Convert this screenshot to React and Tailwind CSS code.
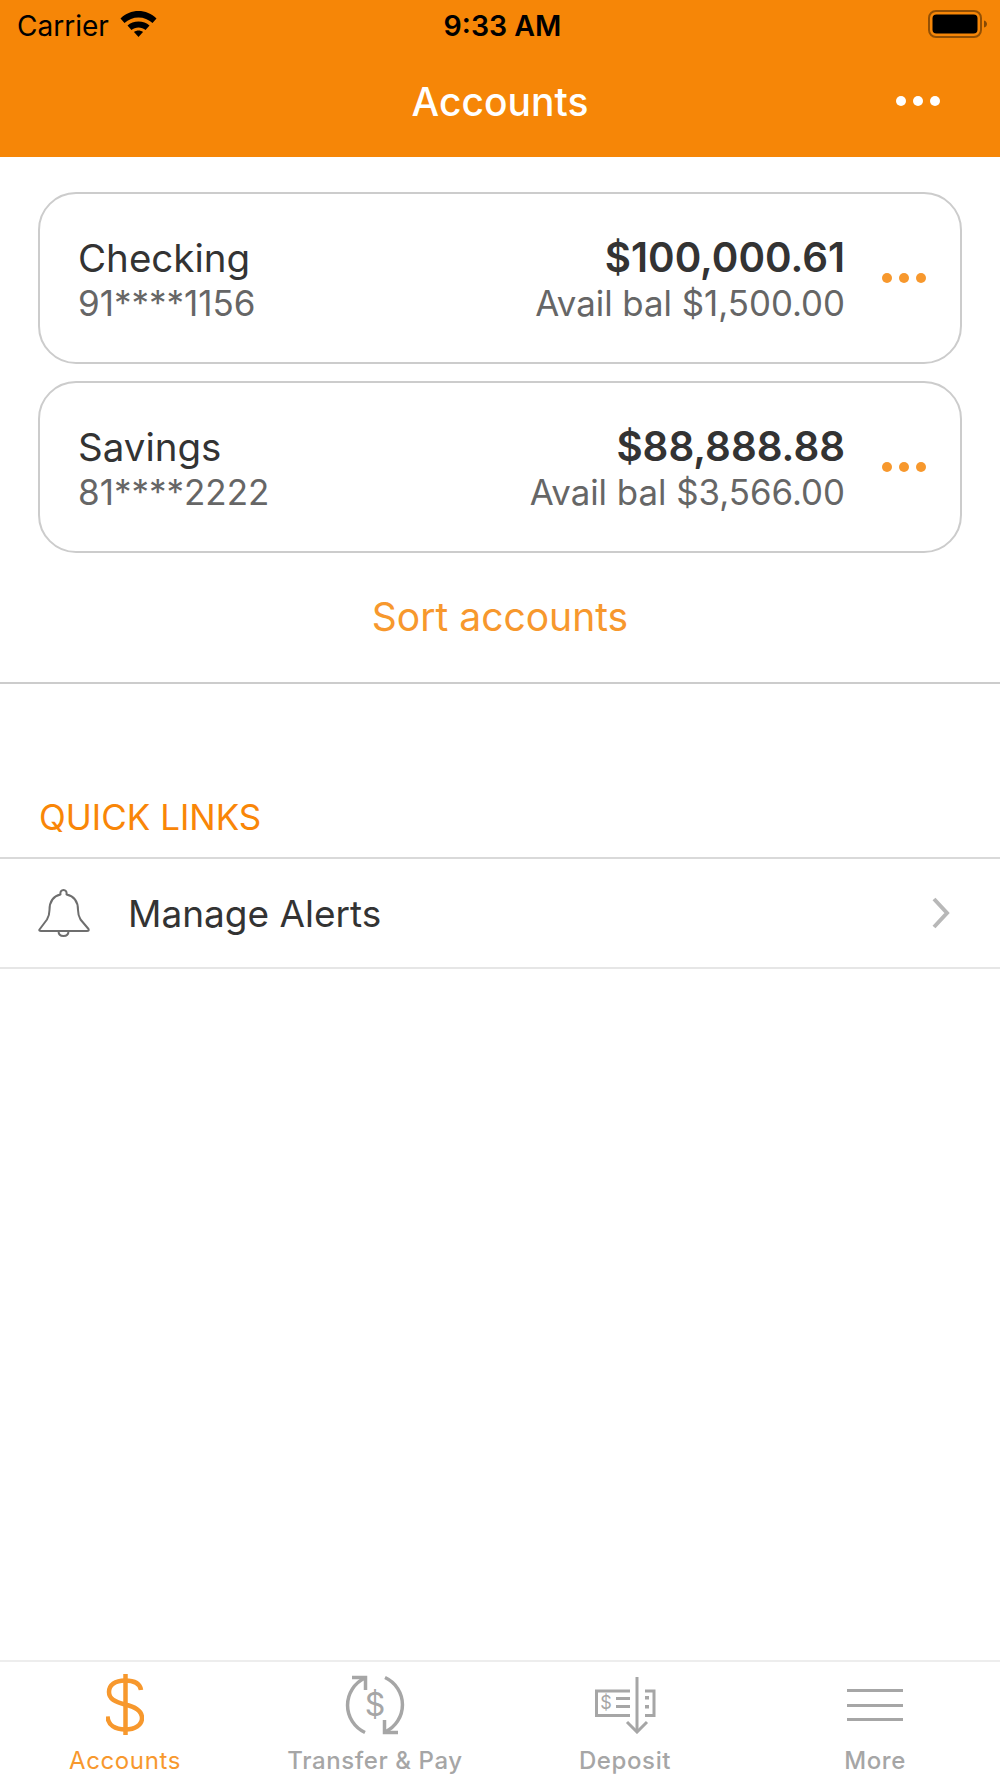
const font = { fontFamily: '"Inter", "Liberation Sans", sans-serif' };

function Dots({ color }) {
  return (
    <div className="flex gap-[7px]">
      <div className={`h-[10px] w-[10px] rounded-full ${color}`} />
      <div className={`h-[10px] w-[10px] rounded-full ${color}`} />
      <div className={`h-[10px] w-[10px] rounded-full ${color}`} />
    </div>
  );
}

function Wifi() {
  return (
    <svg width="37" height="27" viewBox="0 0 37 27" className="block">
      <path d="M0.500 8.500C10 -1.500 27 -1.500 36.500 8.500L32.500 13C25 5.500 12 5.500 4.500 13Z" fill="#000" />
      <path d="M7.500 15.500C13 10 24 10 29.500 15.500L25.500 20C22 16.500 15 16.500 11.500 20Z" fill="#000" />
      <path d="M14 22C16.500 20 20.500 20 23 22L18.500 27Z" fill="#000" />
    </svg>
  );
}

function Battery() {
  return (
    <svg width="60" height="28" viewBox="0 0 60 28" className="block">
      <rect x="1" y="1" width="52" height="26" rx="7" fill="none" stroke="#000" strokeOpacity="0.4" strokeWidth="2" />
      <rect x="4.500" y="4.500" width="45" height="19" rx="4" fill="#000" />
      <path d="M56 10.500C58 11 59 12.500 59 14C59 15.500 58 17 56 17.500Z" fill="#000" fillOpacity="0.45" />
    </svg>
  );
}

function Card({ name, num, bal, avail }) {
  return (
    <div className="flex h-[172px] items-center rounded-[38px] border-2 border-[#cccccc] pl-[38px] pr-[34px]">
      <div className="flex-1 pt-[4px]">
        <div className="text-[38.500px] leading-[46px] text-[#333333]">{name}</div>
        <div className="text-[35px] leading-[44px] text-[#666666]">{num}</div>
      </div>
      <div className="pt-[4px] text-right">
        <div className="text-[40.300px] leading-[46px] font-semibold text-[#333333]">{bal}</div>
        <div className="text-[34.800px] leading-[44px] text-[#666666]">{avail}</div>
      </div>
      <div className="ml-[37px]">
        <Dots color="bg-[#f7982d]" />
      </div>
    </div>
  );
}

function DollarIcon() {
  return (
    <svg width="38" height="62" viewBox="0 0 38 62" fill="none" stroke="#f7982d" strokeWidth="4.500" className="block">
      <path d="M19.500 0V61" />
      <path d="M35 16C34 9 28 6.500 19 6.500C9 6.500 3 11 3 18C3 25 9 28 19 30.500C30 33 36 37 36 44C36 51 29 55.500 19.500 55.500C9 55.500 2 51 1.500 42.500" />
    </svg>
  );
}

function TransferIcon() {
  return (
    <svg width="60" height="60" viewBox="0 0 60 60" fill="none" stroke="#a6a6a6" strokeWidth="3.500" className="block">
      <path d="M20 57.500A30 30 0 0 1 20 3" />
      <path d="M7 2.500H20.500V15" />
      <path d="M40 2.500A30 30 0 0 1 40 57" />
      <path d="M53 57.500H39.500V45" />
      <text x="30" y="41" textAnchor="middle" fontSize="32" fill="#a6a6a6" stroke="none" style={font}>$</text>
    </svg>
  );
}

function DepositIcon() {
  return (
    <svg width="62" height="58" viewBox="0 0 62 58" fill="none" stroke="#a6a6a6" strokeWidth="3" className="block">
      <path d="M43 1V56" />
      <path d="M33 46L43 56L53 46" />
      <path d="M36 15H2.500V39.500H36" />
      <path d="M51 15H60V39.500H51" />
      <path d="M22 22.500H36" />
      <path d="M22 30.500H36" />
      <rect x="51" y="20" width="4" height="3.500" fill="#a6a6a6" stroke="none" />
      <rect x="51" y="29" width="4" height="3.500" fill="#a6a6a6" stroke="none" />
      <text x="12" y="33" textAnchor="middle" fontSize="18" fill="#a6a6a6" stroke="none" style={font}>$</text>
    </svg>
  );
}

function MoreIcon() {
  return (
    <div className="flex w-[56px] flex-col gap-[11.500px]">
      <div className="h-[3px] bg-[#a6a6a6]" />
      <div className="h-[3px] bg-[#a6a6a6]" />
      <div className="h-[3px] bg-[#a6a6a6]" />
    </div>
  );
}

function Tab({ label, active, children }) {
  return (
    <div className="flex w-[250px] flex-col items-center">
      <div className="flex h-[62px] items-center justify-center">{children}</div>
      <div className={`mt-[10px] text-[24px] leading-[30px] tracking-[0.6px] ${active ? "font-normal text-[#f7982d]" : "font-medium text-[#a6a6a6]"}`}>{label}</div>
    </div>
  );
}

export default function App() {
  return (
    <div className="flex h-[1778px] w-[1000px] flex-col overflow-hidden bg-white" style={font}>
      <div className="flex h-[157px] flex-col bg-[#f68607]">
        <div className="flex h-[47px] items-center px-[12px]">
          <div className="flex flex-1 items-center gap-[11px] pl-[5px]">
            <span className="mt-[5px] text-[28px] leading-[50px] text-black">Carrier</span>
            <Wifi />
          </div>
          <span className="mt-[5px] text-[28.500px] font-semibold leading-[50px] text-black">9:33 AM</span>
          <div className="flex flex-1 justify-end">
            <Battery />
          </div>
        </div>
        <div className="relative flex flex-1 items-center justify-center">
          <span className="text-[39px] font-medium leading-[46px] text-white">Accounts</span>
          <div className="absolute right-[60px] top-[49px]">
            <Dots color="bg-white" />
          </div>
        </div>
      </div>

      <div className="flex flex-col gap-[17px] px-[38px] pt-[35px]">
        <Card name="Checking" num="91****1156" bal="$100,000.61" avail="Avail bal $1,500.00" />
        <Card name="Savings" num="81****2222" bal="$88,888.88" avail="Avail bal $3,566.00" />
      </div>

      <div className="flex h-[131px] items-center justify-center border-b-2 border-[#cccccc] pb-[1px] text-[39px] text-[#f7982d]">
        Sort accounts
      </div>

      <div className="mt-[113px] border-b-2 border-[#d9d9d9] pb-[20px] pl-[39px] text-[35px] leading-[40px] text-[#f98607]">
        QUICK LINKS
      </div>

      <div className="flex h-[110px] items-center border-b-2 border-[#e6e6e6] pl-[38px] pr-[50px]">
        <svg width="52" height="48" viewBox="0 0 52 48" fill="none" stroke="#6e6e6e" strokeWidth="2" strokeLinejoin="round" className="block">
          <path d="M1.500 40.500L9 30.500C11 27 11.500 25 11.500 21C11.500 12 16 7 22.500 5.500C22 2.500 23.500 1 25.500 1C27.500 1 29 2.500 28.500 5.500C35.500 7 40 12 40 21C40 25 40.500 27 42.500 30.500L50.500 40C51 41.500 50.500 42 49 42H3C1.500 42 1 41.500 1.500 40.500Z" />
          <path d="M20.500 42C20.500 45.500 23 47 25.500 47C28 47 30.500 45.500 30.500 42" />
        </svg>
        <div className="ml-[38px] flex-1 pt-[2px] text-[37px] text-[#333333]">Manage Alerts</div>
        <svg width="18" height="32" viewBox="0 0 18 32" fill="none" stroke="#b8b8b8" strokeWidth="4" className="block">
          <path d="M2 2L15 16L2 30" />
        </svg>
      </div>

      <div className="flex-1" />

      <div className="flex h-[118px] border-t-2 border-[#ededed] pt-[12px]">
        <Tab label="Accounts" active><DollarIcon /></Tab>
        <Tab label="Transfer &amp; Pay"><TransferIcon /></Tab>
        <Tab label="Deposit"><DepositIcon /></Tab>
        <Tab label="More"><MoreIcon /></Tab>
      </div>
    </div>
  );
}
